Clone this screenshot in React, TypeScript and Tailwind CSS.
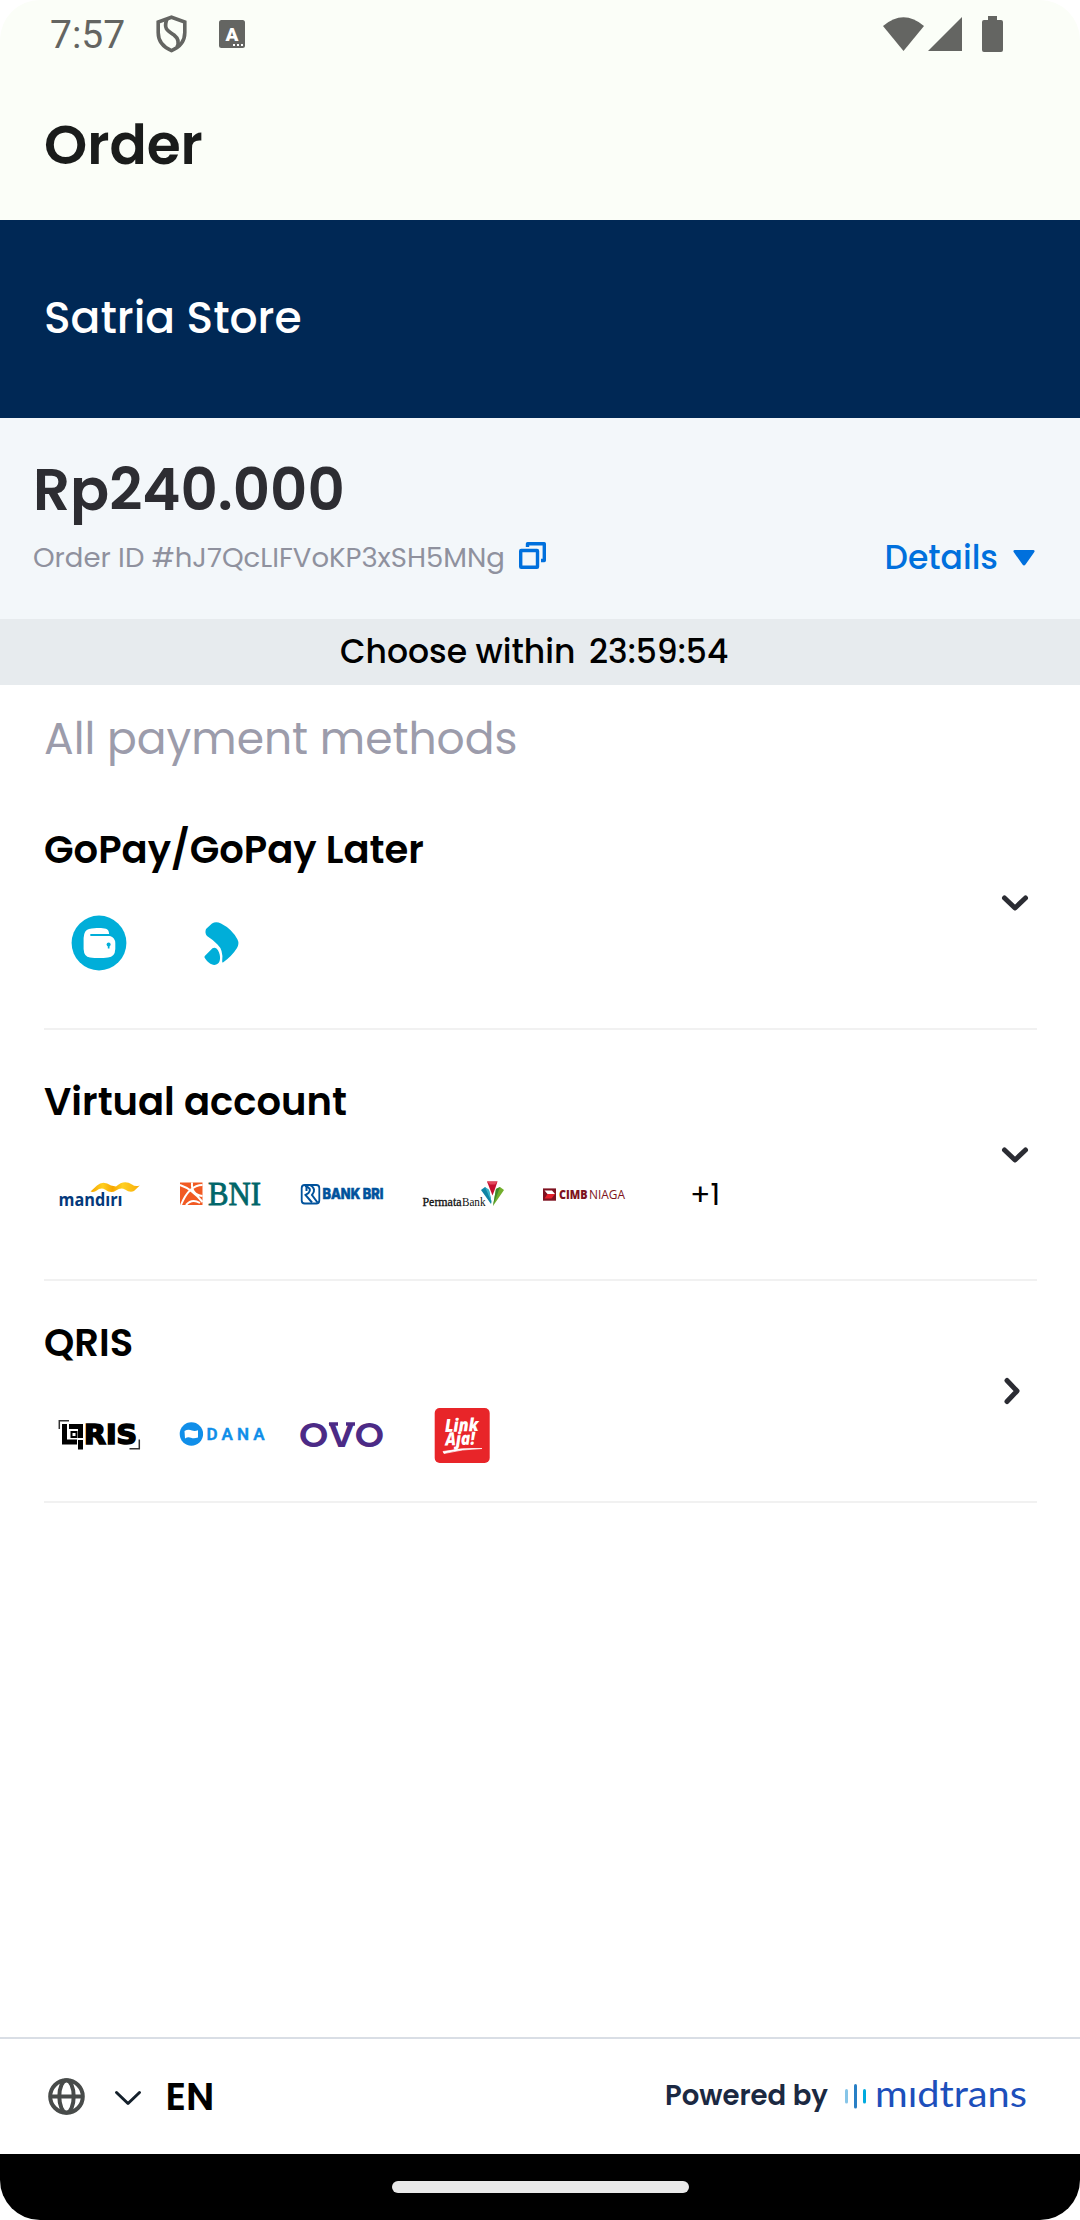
import type { ReactNode } from "react";

const SANS = "Poppins, Inter, sans-serif";

type FitProps = { x: number; y: number; w: number; size: number; fill: string; weight?: number; family?: string; italic?: boolean; spaced?: boolean; children: string };

function FitText({ x, y, w, size, fill, weight = 400, family = SANS, italic, spaced, children }: FitProps) {
  return (
    <text x={x} y={y} textLength={w} lengthAdjust={spaced ? "spacing" : "spacingAndGlyphs"} fontSize={size} fontWeight={weight} fontFamily={family} fontStyle={italic ? "italic" : "normal"} fill={fill}>
      {children}
    </text>
  );
}

function Logo({ label, children }: { label: string; children: ReactNode }) {
  return (
    <div className="flex w-[120.8px] justify-center" aria-label={label}>
      <svg viewBox="-50 -30 100 60" className="h-[60px] w-[100px] overflow-visible">{children}</svg>
    </div>
  );
}

function GoPay() {
  return (
    <Logo label="GoPay">
      <circle cx="0" cy="0" r="27.4" fill="#00aed9" />
      <path d="M-10 -14 C-3 -15.3 3 -15.2 7 -14.3 Q10 -13 10 -9.5 L11 -7 Q16 -5.500 16.300 0 L16.300 6 Q16 14 9 14.500 Q0 15.500 -9 14.500 Q-15 14 -15.400 6 V-5 Q-15 -13 -10 -14Z" fill="#fff" />
      <path d="M-8 -8 H13" stroke="#00aed9" strokeWidth="1.800" strokeLinecap="round" />
      <circle cx="9.600" cy="1.500" r="2" fill="#00aed9" />
      <rect x="8.800" y="1.500" width="1.700" height="4" fill="#00aed9" />
    </Logo>
  );
}

function GoPayLater() {
  return (
    <Logo label="GoPay Later">
      <path d="M-14 -14 L-8 -19.500 Q-4 -22 1 -19.500 Q12 -14 17.500 -3.500 Q19.500 0.500 17 5 Q12 13 3 19.500 Q2 19.800 2.200 18 Q3.500 7 -2.500 1.500 Q-8 -4 -13 -7 Q-15.500 -10 -14 -14Z" fill="#00aed9" />
      <path d="M-7.500 5.300 Q-5.500 4 -3.500 5.500 C1 10 1 18.500 -2 20.500 C-6 24 -12 20.500 -15.500 14.500 Q-15.700 13.500 -15 12.800Z" fill="#00aed9" />
    </Logo>
  );
}

function Mandiri() {
  return (
    <Logo label="Mandiri">
      <defs>
        <linearGradient id="gold" x1="0" x2="1">
          <stop offset="0" stopColor="#f5a500" /><stop offset=".25" stopColor="#ffcf20" /><stop offset=".45" stopColor="#f7a600" /><stop offset=".65" stopColor="#ffd022" /><stop offset="1" stopColor="#f8ac08" />
        </linearGradient>
      </defs>
      <path d="M-8.500 -2.500 L-2 -8.500 Q4 -14 12 -8.500 L17 -7.500 Q25 -15 33 -9.500 Q36 -7 40.800 -8.500 L35 -3 Q31 -1 26 -4.500 Q22 -7 17 -3.500 Q12 0 6 -4.500 Q2 -7 -3 -3 Q-6 -1.500 -8.500 -2.500Z" fill="url(#gold)" />
      <FitText x={-40.5} y={12} w={64} size={18.5} weight={700} fill="#04397b" family='"Open Sans", sans-serif'>mandırı</FitText>
    </Logo>
  );
}

function BNI() {
  return (
    <Logo label="BNI">
      <rect x="-40" y="-11.500" width="22.500" height="22.500" fill="#f15a23" />
      <path d="M-40 -9 Q-28 -5 -17.500 8 M-39 11 Q-31 -9 -17.500 -9 M-28 -11.500 Q-29 1 -17.500 2 M-34 11 Q-28 4 -20 9" fill="none" stroke="#fff" strokeWidth="2" />
      <g stroke="#006669" strokeWidth=".8">
        <FitText x={-12} y={11} w={53} size={34} fill="#006669" family='"Liberation Serif", serif'>BNI</FitText>
      </g>
    </Logo>
  );
}

function BRI() {
  return (
    <Logo label="Bank BRI">
      <rect x="-39.300" y="-9" width="17.600" height="18.500" rx="3" fill="#fff" stroke="#00529c" strokeWidth="1.800" />
      <path d="M-36 -8 Q-28.500 -6 -32.500 -1 L-35.500 1 L-29 8.500 M-31 -9 Q-24 -5 -29 1 L-23.500 8.500 M-34.500 -8.500 V-3" fill="none" stroke="#00529c" strokeWidth="2" />
      <g stroke="#00529c" strokeWidth=".6">
        <FitText x={-18.500} y={5.300} w={61} size={14.5} weight={800} fill="#00529c" family="Inter, sans-serif">BANK BRI</FitText>
      </g>
    </Logo>
  );
}

function Permata() {
  return (
    <Logo label="PermataBank">
      <text y="12" fontSize="11.500" fontFamily='"Liberation Serif", serif' fill="#111">
        <tspan x="-39.500" stroke="#111" strokeWidth=".3" textLength="39" lengthAdjust="spacingAndGlyphs">Permata</tspan>
        <tspan x="0" textLength="23.500" lengthAdjust="spacingAndGlyphs">Bank</tspan>
      </text>
      <path d="M19 -4 L23 -7 L27 -4 L29.500 8 L29 10Z" fill="#0e84a4" />
      <path d="M23 -7 L27 -4 L29.500 8Z" fill="#38b4c8" />
      <path d="M42 -4 L38 -7 L34 -5 L31 12Z" fill="#72ae2c" />
      <path d="M38 -7 L34 -5 L31 12Z" fill="#3d8a2c" />
      <path d="M25 -12.500 H35.500 L33 -5 L30.500 1.500 L27.500 -6Z" fill="#c40f2e" />
      <path d="M25 -12.500 H35.500 L33 -9.500 H28Z" fill="#e2485c" />
    </Logo>
  );
}

function Cimb() {
  return (
    <Logo label="CIMB Niaga">
      <rect x="-40" y="-5.600" width="13" height="12.300" fill="#7e1220" />
      <path d="M-38.500 -3.500 H-31 L-28 0 H-35.500Z" fill="#fff" />
      <path d="M-35.500 0 H-28 L-31.500 4.500 H-38.500Z" fill="#e5202b" />
      <FitText x={-24} y={5} w={28.500} size={12} weight={800} fill="#7e1220" family='"Open Sans", sans-serif'>CIMB</FitText>
      <FitText x={6} y={5} w={36} size={12} fill="#7e1220" family='"Open Sans", sans-serif'>NIAGA</FitText>
    </Logo>
  );
}

function Qris() {
  return (
    <Logo label="QRIS">
      <path d="M-39.700 -5 V-13.200 H-30 M40.300 5.500 V14.700 H30.500" fill="none" stroke="#333" strokeWidth="1.500" />
      <path d="M-34.500 -10 V8 H-22 M-30 -7.500 H-18.500 V4 M-18.500 6 V15.500" fill="none" stroke="#000" strokeWidth="5" />
      <rect x="-27.500" y="-2" width="5" height="5" fill="#fff" stroke="#000" strokeWidth="2" />
      <g stroke="#000" strokeWidth="1.6">
        <FitText x={-15} y={9.8} w={53} size={26} weight={700} fill="#000" family='"DejaVu Sans", sans-serif'>RIS</FitText>
      </g>
    </Logo>
  );
}

function Dana() {
  return (
    <Logo label="DANA">
      <circle cx="-28.600" cy="0" r="11.700" fill="#108ee9" />
      <path d="M-35.500 -3 Q-32 -5 -28 -3.500 Q-25 -2.500 -22 -3.800 V3.500 Q-26 5 -29 3.800 Q-32 2.500 -35 4.500Z" fill="#fff" />
      <g stroke="#108ee9" strokeWidth=".4">
        <FitText x={-13.500} y={6.200} w={58} size={17} weight={600} fill="#108ee9" family="Roboto, sans-serif" spaced>DANA</FitText>
      </g>
    </Logo>
  );
}

function Ovo() {
  return (
    <Logo label="OVO">
      <FitText x={-42} y={12.500} w={85} size={34} weight={600} fill="#4c2a86">OVO</FitText>
      <path d="M-12 -10 H-3 M5 -10 H14" stroke="#4c2a86" strokeWidth="3.400" />
    </Logo>
  );
}

function LinkAja() {
  return (
    <Logo label="LinkAja!">
      <rect x="-27.300" y="-26" width="55" height="55" rx="5" fill="#e82529" />
      <g transform="rotate(-2)">
        <FitText x={-17} y={-2.500} w={34} size={18} weight={800} fill="#fff" italic family='"Open Sans", sans-serif'>Link</FitText>
        <FitText x={-17} y={11} w={30} size={18} weight={800} fill="#fff" italic family='"Open Sans", sans-serif'>Aja!</FitText>
      </g>
      <path d="M-19 17.500 Q0 13.500 20 14.500 Q0 15 -18 19.500Z" fill="#fff" stroke="#fff" strokeWidth=".7" />
    </Logo>
  );
}

function Chevron({ right }: { right?: boolean }) {
  return (
    <svg viewBox="0 0 32 32" className={right ? "mr-[9px] h-8 w-8 -rotate-90" : "mt-2 mr-[6px] h-8 w-8"} fill="none" stroke="#2b2c33" strokeWidth="5" strokeLinecap="round" strokeLinejoin="round">
      <path d="M5.500 11 L16 21 L26.500 11" />
    </svg>
  );
}

function StatusBar() {
  return (
    <div className="flex h-[66px] items-center pt-0.5 text-[#646562]">
      <span className="mt-0.5 ml-[50px] w-[106px] font-[Roboto] text-[39px] leading-none">7:57</span>
      <svg viewBox="0 0 31 38" className="h-[38px] w-[31px]" fill="none" stroke="currentColor" strokeWidth="3.600">
        <path d="M15.500 2.200 L28.800 7 V17.500 C28.800 26 24 32 15.500 35.600 C7 32 2.200 26 2.200 17.500 V7Z" />
        <path d="M11 4 C7 14 12 16 18 20 C23 24 23 28 21 32" />
      </svg>
      <svg viewBox="0 0 26 28" className="ml-8 h-7 w-[26px]">
        <rect width="26" height="28" rx="2.500" fill="currentColor" />
        <text x="13" y="20.500" textAnchor="middle" fontSize="19" fontWeight="900" fontFamily="Roboto" fill="#fff">A</text>
        <path d="M14 25 h2 m2 0 h2 m2 0 h2" stroke="#fff" strokeWidth="2" />
      </svg>
      <div className="mr-[77px] ml-auto flex items-center">
        <svg viewBox="0 0 41 34" className="h-[34px] w-[41px]" fill="currentColor"><path d="M0 9 Q20.500 -8.500 41 9 L20.500 34Z" /></svg>
        <svg viewBox="0 0 34 34" className="ml-1 h-[34px] w-[34px]" fill="currentColor"><path d="M0 34 L34 0 V34Z" /></svg>
        <svg viewBox="0 0 21 36" className="ml-5 h-9 w-[21px]" fill="currentColor"><path d="M6 0 H15 V4 H19 Q21 4 21 6 V34 Q21 36 19 36 H2 Q0 36 0 34 V6 Q0 4 2 4 H6Z" /></svg>
      </div>
    </div>
  );
}

function Method({ title, className, logosClass, right, children }: { title: string; className: string; logosClass: string; right?: boolean; children: ReactNode }) {
  return (
    <section className={className}>
      <div className="flex flex-1 flex-col">
        <h3 className="text-[38.5px] leading-[50px] font-semibold whitespace-nowrap text-black">{title}</h3>
        <div className={logosClass}>{children}</div>
      </div>
      <Chevron right={right} />
    </section>
  );
}

export default function App() {
  return (
    <div className="h-[2220px] w-[1080px] bg-white font-[Poppins,Inter,sans-serif]">
      <div className="flex h-full flex-col overflow-hidden rounded-[40px] bg-white">
        <header className="h-[220px] bg-[#fbfef8]">
          <StatusBar />
          <h1 className="mt-[46px] ml-11 text-[55px] leading-[66px] font-semibold text-[#1a1c1b]">Order</h1>
        </header>

        <div className="flex h-[198px] items-center bg-[#002855] pb-[3px] pl-11">
          <h2 className="text-[44px] leading-none font-medium text-white">Satria Store</h2>
        </div>

        <div className="h-[201px] bg-[#f3f7fa] pt-[37px] pl-[33px]">
          <div className="text-[57.75px] leading-[70px] font-semibold text-[#2d2d32]">Rp240.000</div>
          <div className="flex h-[66px] items-center">
            <span className="w-[486px] text-[27.5px] whitespace-nowrap text-[#8f919e]">Order ID #hJ7QcLIFVoKP3xSH5MNg</span>
            <svg viewBox="0 0 27 27" className="mb-[6px] h-[27px] w-[27px]" fill="none" stroke="#0070dd" strokeWidth="3.4">
              <rect x="1.700" y="8.500" width="16.800" height="16.800" rx=".5" />
              <path d="M8.500 5 V1.700 H25.300 V18.500 H22" strokeLinejoin="round" />
            </svg>
            <span className="ml-auto text-[33px] font-medium text-[#0070dd]">Details</span>
            <svg viewBox="0 0 22 16" className="mr-[45px] ml-[15px] h-4 w-[22px]" fill="#0070dd"><path d="M1.500 0 H20.500 Q22.500 .5 21 2.500 L12.500 14.500 Q11 16.500 9.500 14.500 L1 2.500 Q-.5 .5 1.500 0Z" /></svg>
          </div>
        </div>

        <div className="flex h-[66px] items-center bg-[#e7ebee] pl-[340px] text-[33px] font-medium text-black">
          <span className="w-[249px] whitespace-nowrap">Choose within</span>
          <span>23:59:54</span>
        </div>

        <main className="flex-1 pr-[43px] pl-11">
          <h2 className="h-[79px] pt-[27px] text-[44px] leading-[54px] text-[#9c9cab]">All payment methods</h2>
          <Method title="GoPay/GoPay Later" className="flex h-[266px] items-center border-b-2 border-[#f1f1f1] pt-[5px]" logosClass="mt-[38px] -ml-[5px] flex h-[60px]">
            <GoPay /><GoPayLater />
          </Method>
          <Method title="Virtual account" className="flex h-[251px] items-center border-b-2 border-[#f1f1f1] pb-2" logosClass="mt-[37px] -ml-[5px] flex h-[60px] items-center">
            <Mandiri /><BNI /><BRI /><Permata /><Cimb />
            <span className="w-[124px] text-center text-[30px] text-black">+1</span>
          </Method>
          <Method title="QRIS" right className="flex h-[222px] items-center border-b-2 border-[#f1f1f1]" logosClass="mt-[36px] -ml-[5px] flex h-[60px]">
            <Qris /><Dana /><Ovo /><LinkAja />
          </Method>
        </main>

        <footer className="flex h-[117px] items-center border-t-2 border-[#d9dee5] bg-white">
          <svg viewBox="0 0 37 37" className="ml-[47.500px] h-[37px] w-[37px]" fill="none" stroke="#484b4a" strokeWidth="4">
            <circle cx="18.500" cy="18.500" r="16.300" /><ellipse cx="18.500" cy="18.500" rx="7.200" ry="16.300" /><path d="M2 18.500 H35" />
          </svg>
          <svg viewBox="0 0 28 17" className="mt-[3px] ml-[29px] h-[17px] w-7" fill="none" stroke="#14202b" strokeWidth="3" strokeLinecap="round" strokeLinejoin="round"><path d="M2.500 2.500 L14 13.500 L25.500 2.500" /></svg>
          <span className="ml-[24px] text-[38.5px] font-semibold text-black">EN</span>
          <span className="mb-0.5 ml-auto w-[180px] text-[27.5px] font-semibold whitespace-nowrap text-[#1b2942]">Powered by</span>
          <svg viewBox="0 0 190 60" className="mr-[45px] h-[60px] w-[190px] overflow-visible" aria-label="midtrans">
            <g fill="none" strokeWidth="3" strokeLinecap="round">
              <path d="M1.500 23.500 V35" stroke="#86c5e8" /><path d="M10.500 18.500 V40" stroke="#287fc5" /><path d="M19.500 23.500 V35" stroke="#00abdf" />
            </g>
            <FitText x={30} y={40} w={152} size={37} fill="#1d4fbb" family="Lato, sans-serif">mıdtrans</FitText>
          </svg>
        </footer>

        <div className="flex h-[66px] items-center justify-center bg-black">
          <div className="h-3 w-[297px] rounded-full bg-[#e9e9e9]" />
        </div>
      </div>
    </div>
  );
}
